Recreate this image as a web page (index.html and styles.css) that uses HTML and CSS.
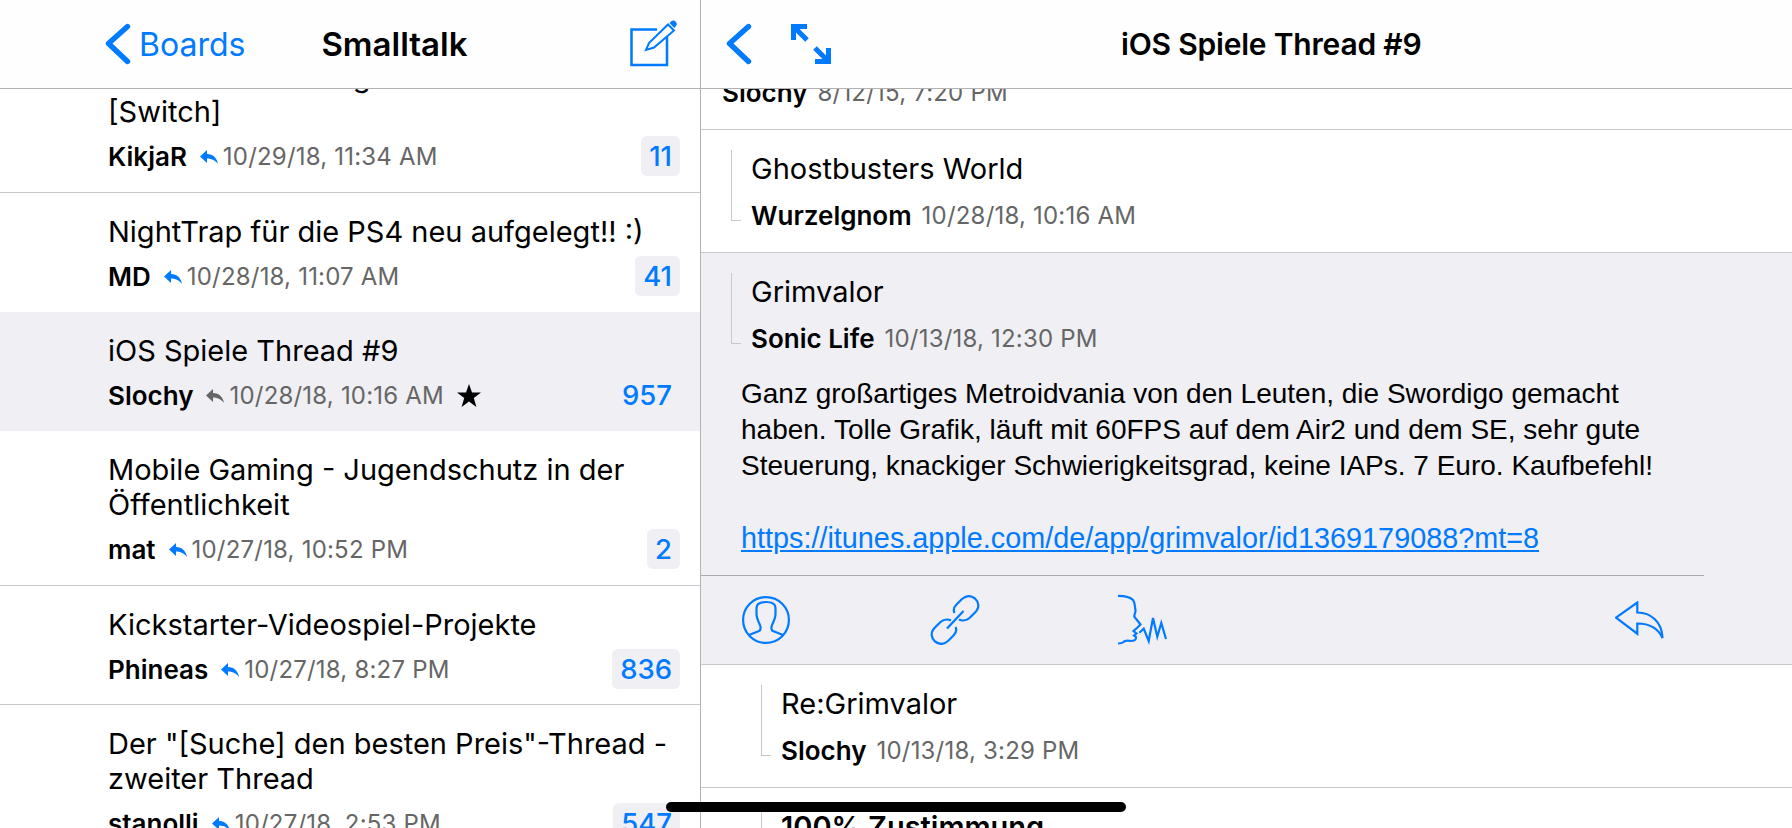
FILE: index.html
```html
<!DOCTYPE html>
<html lang="en">
<head>
    <meta charset="UTF-8">
    <meta name="viewport" content="width=device-width, initial-scale=1.0">
    <title>Smalltalk</title>
    <link rel="stylesheet" href="styles.css">
</head>
<body>
    <div class="app">
        <!-- Thread list -->
        <section class="side">
            <header class="nav nav-side">
                <svg class="chevron" viewBox="0 0 26 42"><path d="M22.5 3.5 L3.5 20.5 L22.5 38.5"/></svg>
                <span class="nav-back">Boards</span>
                <h1 class="nav-title nav-title-side">Smalltalk</h1>
                <svg class="compose" viewBox="0 0 49 48">
                    <path class="thin" d="M29 9.5 H3.5 V45 H39 V17"/>
                    <path class="pen" d="M18 30 L21 23 L40 4.5 L46 10.5 L26 27.5 Z"/>
                    <path class="pen-top" d="M41.5 3 L43 1.6 A3 3 0 0 1 47.6 6.4 L46.4 8 Z"/>
                </svg>
            </header>
            <div class="list">
                <article class="row row-two row-first">
                    <h2 class="row-title">Nintendo Ankündigen und Neues<br>[Switch]</h2>
                    <div class="row-meta">
                        <b class="author">KikjaR</b>
                        <svg class="reply" viewBox="0 0 18 14"><path d="M0 6.5 L7 0 V4 C13 4 17 8 18 14 C15 10 11 8.5 7 8.5 V13 Z"/></svg>
                        <span class="date">10/29/18, 11:34 AM</span>
                        <span class="badge">11</span>
                    </div>
                </article>
                <article class="row row-flat">
                    <h2 class="row-title">NightTrap für die PS4 neu aufgelegt!! :)</h2>
                    <div class="row-meta">
                        <b class="author">MD</b>
                        <svg class="reply" viewBox="0 0 18 14"><path d="M0 6.5 L7 0 V4 C13 4 17 8 18 14 C15 10 11 8.5 7 8.5 V13 Z"/></svg>
                        <span class="date">10/28/18, 11:07 AM</span>
                        <span class="badge">41</span>
                    </div>
                </article>
                <article class="row row-active">
                    <h2 class="row-title">iOS Spiele Thread #9</h2>
                    <div class="row-meta">
                        <b class="author">Slochy</b>
                        <svg class="reply" viewBox="0 0 18 14"><path d="M0 6.5 L7 0 V4 C13 4 17 8 18 14 C15 10 11 8.5 7 8.5 V13 Z"/></svg>
                        <span class="date">10/28/18, 10:16 AM</span>
                        <svg class="star" viewBox="0 0 24 23"><path d="M12 0 L15 8.6 H24 L16.8 14 L19.4 23 L12 17.6 L4.6 23 L7.2 14 L0 8.6 H9 Z"/></svg>
                        <span class="badge">957</span>
                    </div>
                </article>
                <article class="row row-two">
                    <h2 class="row-title">Mobile Gaming - Jugendschutz in der Öffentlichkeit</h2>
                    <div class="row-meta">
                        <b class="author">mat</b>
                        <svg class="reply" viewBox="0 0 18 14"><path d="M0 6.5 L7 0 V4 C13 4 17 8 18 14 C15 10 11 8.5 7 8.5 V13 Z"/></svg>
                        <span class="date">10/27/18, 10:52 PM</span>
                        <span class="badge">2</span>
                    </div>
                </article>
                <article class="row">
                    <h2 class="row-title">Kickstarter-Videospiel-Projekte</h2>
                    <div class="row-meta">
                        <b class="author">Phineas</b>
                        <svg class="reply" viewBox="0 0 18 14"><path d="M0 6.5 L7 0 V4 C13 4 17 8 18 14 C15 10 11 8.5 7 8.5 V13 Z"/></svg>
                        <span class="date">10/27/18, 8:27 PM</span>
                        <span class="badge">836</span>
                    </div>
                </article>
                <article class="row row-two">
                    <h2 class="row-title">Der "[Suche] den besten Preis"-Thread - zweiter Thread</h2>
                    <div class="row-meta">
                        <b class="author">stanolli</b>
                        <svg class="reply" viewBox="0 0 18 14"><path d="M0 6.5 L7 0 V4 C13 4 17 8 18 14 C15 10 11 8.5 7 8.5 V13 Z"/></svg>
                        <span class="date">10/27/18, 2:53 PM</span>
                        <span class="badge">547</span>
                    </div>
                </article>
            </div>
        </section>

        <!-- Thread detail -->
        <section class="detail">
            <header class="nav nav-detail">
                <svg class="chevron" viewBox="0 0 26 42"><path d="M22.5 3.5 L3.5 20.5 L22.5 38.5"/></svg>
                <svg class="expand" viewBox="0 0 40 40">
                    <path class="fill" d="M0 0 H16 V5 H5 V16 H0 Z M40 40 H24 V35 H35 V24 H40 Z"/>
                    <path class="shaft" d="M3 3 L16 16 M37 37 L24 24"/>
                </svg>
                <h1 class="nav-title nav-title-detail">iOS Spiele Thread #9</h1>
            </header>
            <div class="posts">
                <article class="post post-first">
                    <div class="post-meta"><b class="post-author">Slochy</b><span class="date">8/12/15, 7:20 PM</span></div>
                </article>
                <article class="post">
                    <div class="post-head">
                        <span class="thread-line"></span>
                        <div class="post-text">
                            <h3 class="post-title">Ghostbusters World</h3>
                            <div class="post-meta"><b class="post-author">Wurzelgnom</b><span class="date">10/28/18, 10:16 AM</span></div>
                        </div>
                    </div>
                </article>
                <article class="post post-open">
                    <div class="post-head">
                        <span class="thread-line"></span>
                        <div class="post-text">
                            <h3 class="post-title">Grimvalor</h3>
                            <div class="post-meta"><b class="post-author">Sonic Life</b><span class="date">10/13/18, 12:30 PM</span></div>
                        </div>
                    </div>
                    <p class="post-body">
                        Ganz großartiges Metroidvania von den Leuten, die Swordigo gemacht haben. Tolle Grafik, läuft mit 60FPS auf dem Air2 und dem SE, sehr gute Steuerung, knackiger Schwierigkeitsgrad, keine IAPs. 7 Euro. Kaufbefehl!<br><br>
                        <a href="#">https://itunes.apple.com/de/app/grimvalor/id1369179088?mt=8</a>
                    </p>
                    <div class="toolbar">
                        <svg class="tool tool-user" viewBox="0 0 48 48">
                            <circle cx="24" cy="24" r="22.9"/>
                            <path d="M7 39 L17 35 C19 34 19 32 18 29 C16 25 14.5 22 14.5 18 V12 C14.5 8 18 6 24 6 C30 6 33.5 8 33.5 12 V18 C33.5 22 32 25 30 29 C29 32 29 34 31 35 L41 39"/>
                        </svg>
                        <svg class="tool tool-link" viewBox="0 0 50 50">
                            <path d="M24.5 18 C23 15 24 12 26.5 9.5 L32 4 C36 .5 41 .5 45 3.5 C49 7 49.5 12.5 46 16.5 L39.5 23 C36.5 25.5 32 26 29 24.5"/>
                            <path d="M25.5 32 C27 35 26 38 23.5 40.5 L18 46 C14 49.5 9 49.5 5 46.5 C1 43 .5 37.5 4 33.5 L10.5 27 C13.5 24.5 18 24 21 25.5"/>
                            <path d="M17 33.5 L33.5 16"/>
                        </svg>
                        <svg class="tool tool-speak" viewBox="0 0 50 50">
                            <path d="M0 .8 C6 .8 12 1.5 15 5 C17.5 8 16.5 12 17.5 15 C18 18 15.5 19.5 16.5 22 L22.5 29.5 L19.5 32.5 L15.5 36 L18.5 38.5 L16 40.5 L18 42 C18.5 45 16 46 13 46 C10 45.5 7 45 5.5 47 C4 48.5 2 48.5 0 48.5"/>
                            <path d="M21.3 37.7 L25.7 33.7 L30.7 46 L35 23 L39.3 41.7 L43.3 28 L48 44"/>
                        </svg>
                        <svg class="tool tool-reply" viewBox="0 0 49 39">
                            <path d="M1 16.7 L22.3 1.5 V11.5 C36 11.5 47 21 47.5 37 C43 27 34 22.5 22.3 22.5 V32.7 Z"/>
                        </svg>
                    </div>
                </article>
                <article class="post post-nested">
                    <div class="post-head">
                        <span class="thread-line"></span>
                        <div class="post-text">
                            <h3 class="post-title">Re:Grimvalor</h3>
                            <div class="post-meta"><b class="post-author">Slochy</b><span class="date">10/13/18, 3:29 PM</span></div>
                        </div>
                    </div>
                </article>
                <article class="post post-nested">
                    <div class="post-head">
                        <span class="thread-line"></span>
                        <div class="post-text">
                            <h3 class="post-title post-title-bold">100% Zustimmung</h3>
                        </div>
                    </div>
                </article>
            </div>
        </section>
    </div>
    <div class="home-bar"></div>
</body>
</html>
```

FILE: styles.css
```css
/* General */
body {
    margin: 0;
    height: 828px;
    overflow: hidden;
    background: #fff;
    color: #000;
    font-family: Inter, "Noto Sans", sans-serif;
}
h1, h2, h3, p {
    margin: 0;
    font-weight: 400;
}
svg {
    display: block;
    flex: none;
}
.app {
    display: flex;
    height: 828px;
}

/* Navigation bars */
.nav {
    display: flex;
    align-items: center;
    flex: none;
    height: 88px;
    background: #fefefe;
    border-bottom: 1px solid #b2b2b2;
}
.nav-side {
    padding: 0 23px 0 105px;
}
.nav-detail {
    padding-left: 25px;
}
.nav-back {
    margin-left: 8px;
    font-size: 32px;
    color: #007aff;
}
.nav-title {
    font-weight: 600;
}
.nav-title-side {
    margin-left: 76px;
    font-size: 33px;
}
.nav-title-detail {
    margin-left: 290px;
    font-size: 30px;
    letter-spacing: -0.2px;
}
.chevron {
    width: 26px;
    height: 42px;
    fill: none;
    stroke: #007aff;
    stroke-width: 5.4;
    stroke-linecap: round;
    stroke-linejoin: round;
}
.compose {
    width: 49px;
    height: 48px;
    margin-left: auto;
    fill: none;
    stroke: #007aff;
}
.compose .thin {
    stroke-width: 2.5;
}
.compose .pen {
    stroke-width: 2;
}
.compose .pen-top {
    fill: #007aff;
    stroke: none;
}
.expand {
    width: 40px;
    height: 40px;
    margin-left: 39px;
}
.expand .fill {
    fill: #007aff;
}
.expand .shaft {
    fill: none;
    stroke: #007aff;
    stroke-width: 5;
}

/* Thread list */
.side {
    display: flex;
    flex-direction: column;
    flex: none;
    width: 700px;
    border-right: 1px solid #b2b2b2;
}
.list {
    flex: 1;
    overflow: hidden;
}
.row {
    padding: 21px 20px 15px 108px;
    border-bottom: 1px solid #c8c7cc;
}
.row-two {
    padding-bottom: 16px;
}
.row-first {
    margin-top: -51px;
}
.row-flat {
    border-bottom-color: transparent;
}
.row-active {
    background: #efeff4;
    border-bottom-color: #efeff4;
}
.row-title {
    font-size: 29px;
    line-height: 35px;
}
.row-meta {
    display: flex;
    align-items: center;
    height: 40px;
    margin-top: 7px;
}
.author {
    font-size: 26px;
    font-weight: 600;
}
.date {
    font-size: 24px;
    letter-spacing: 0.2px;
    color: #666;
}
.reply {
    width: 18px;
    height: 14px;
    margin: 2px 5px 0 13px;
    fill: #007aff;
}
.row-active .reply {
    fill: #666;
}
.star {
    width: 24px;
    height: 23px;
    margin-left: 13px;
    fill: #000;
}
.badge {
    margin-left: auto;
    padding: 0 8px;
    height: 40px;
    line-height: 40px;
    border-radius: 6px;
    background: #efeff4;
    font-size: 27.5px;
    font-weight: 500;
    color: #007aff;
}

/* Thread detail */
.detail {
    display: flex;
    flex-direction: column;
    flex: 1;
    min-width: 0;
}
.posts {
    flex: 1;
    overflow: hidden;
}
.post {
    padding: 20px 0 22px 30px;
    border-bottom: 1px solid #c8c7cc;
}
.post-first {
    margin-top: -12px;
    padding: 0 0 22px 21px;
}
.post-open {
    padding-bottom: 0;
    background: #efeff4;
}
.post-nested {
    padding-left: 60px;
}
.post-head {
    display: flex;
    gap: 10px;
    align-items: flex-start;
}
.thread-line {
    flex: none;
    width: 9px;
    height: 70px;
    border-left: 1px solid #c8c7cc;
    border-bottom: 1px solid #c8c7cc;
}
.post-text {
    padding-top: 1px;
}
.post-title {
    font-size: 29px;
    line-height: 36px;
}
.post-title-bold {
    font-weight: 600;
}
.post-meta {
    display: flex;
    gap: 10px;
    height: 30px;
    margin-top: 13px;
    align-items: center;
}
.post-first .post-meta {
    margin-top: 0;
}
.post-author {
    font-size: 26px;
    font-weight: 600;
}
.post-body {
    margin: 23px 90px 0 10px;
    font-family: "Liberation Sans", Arial, sans-serif;
    font-size: 28px;
    line-height: 36px;
}
.post-body a {
    font-size: 28.8px;
    color: #007aff;
}

/* Actions below the open post */
.toolbar {
    position: relative;
    display: flex;
    align-items: center;
    height: 88px;
    margin: 19px 0 0 -30px;
}
.toolbar::before {
    content: "";
    position: absolute;
    top: -1px;
    left: 0;
    width: 1003px;
    border-top: 1px solid #a9a9a9;
}
.tool {
    fill: none;
    stroke: #007aff;
    stroke-width: 2.2;
}
.tool-user {
    width: 48px;
    height: 48px;
    margin-left: 41px;
}
.tool-link {
    width: 50px;
    height: 50px;
    margin-left: 140px;
}
.tool-speak {
    width: 50px;
    height: 50px;
    margin-left: 138px;
    overflow: visible;
}
.tool-reply {
    width: 49px;
    height: 39px;
    margin-left: 447px;
}

/* Home indicator */
.home-bar {
    position: absolute;
    left: 666px;
    top: 802px;
    width: 460px;
    height: 10px;
    border-radius: 5px;
    background: #000;
}
```
